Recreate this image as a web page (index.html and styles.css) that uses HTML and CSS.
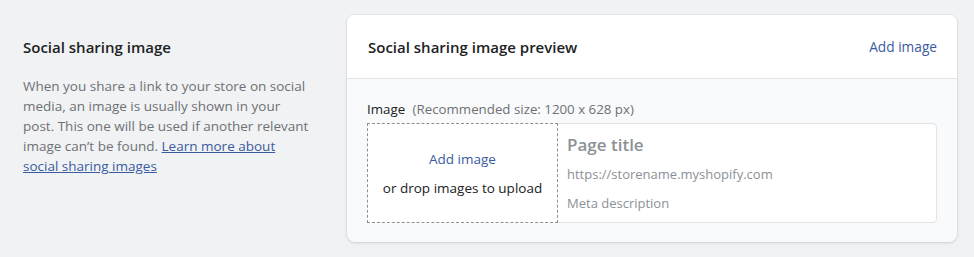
FILE: index.html
```html
<!DOCTYPE html>
<html lang="en">
<head>
<meta charset="utf-8">
<link rel="stylesheet" href="styles.css">
</head>
<body>
<div class="layout">
  <section class="annotation">
    <h2 class="annotation-title">Social sharing image</h2>
    <p class="annotation-text">When you share a link to your store on social media, an image is usually shown in your post. This one will be used if another relevant image can’t be found. <a class="link" href="#">Learn more about social sharing images</a></p>
  </section>
  <section class="card">
    <header class="card-header">
      <h3 class="card-title">Social sharing image preview</h3>
      <a class="action" href="#">Add image</a>
    </header>
    <div class="card-body">
      <div class="label">Image <span class="hint">(Recommended size: 1200 x 628 px)</span></div>
      <div class="preview">
        <div class="dropzone">
          <a class="drop-link" href="#">Add image</a>
          <span class="drop-hint">or drop images to upload</span>
        </div>
        <div class="meta">
          <div class="meta-title">Page title</div>
          <div class="meta-url">https://storename.myshopify.com</div>
          <div class="meta-desc">Meta description</div>
        </div>
      </div>
    </div>
  </section>
</div>
</body>
</html>
```
FILE: styles.css
```css
* { box-sizing: border-box; }
html, body { margin: 0; }
body {
  background: #f1f2f4;
  font-family: "Open Sans", "Noto Sans", sans-serif;
  color: #202223;
  width: 974px;
  height: 257px;
  overflow: hidden;
}
.layout {
  display: grid;
  grid-template-columns: 288px 610px;
  column-gap: 36px;
  padding: 15px 17px 0 23px;
}
.annotation { padding-top: 22px; }
.annotation-title {
  margin: 0;
  font-size: 15px;
  font-weight: 600;
  line-height: 20px;
  color: #202223;
}
.annotation-text {
  margin: 19px 0 0;
  font-size: 13.5px;
  line-height: 20px;
  color: #6d7175;
}
.link { color: #3a5ba0; text-decoration: underline; }
.card {
  background: #f9fafb;
  border-radius: 8px;
  box-shadow: 0 0 0 1px rgba(63,63,68,0.05), 0 1px 3px rgba(63,63,68,0.15);
  overflow: hidden;
}
.card-header {
  height: 64px;
  background: #fff;
  border-bottom: 1px solid #e1e3e5;
  display: flex;
  align-items: center;
  justify-content: space-between;
  padding: 0 20px 0 21px;
}
.card-title {
  margin: 0;
  font-size: 15px;
  font-weight: 600;
  line-height: 20px;
}
.action {
  color: #3a5ba0;
  text-decoration: none;
  font-size: 13.7px;
  line-height: 20px;
}
.card-body { padding: 20px 20px 19px 20px; }
.label {
  font-size: 13.3px;
  line-height: 20px;
  color: #202223;
}
.hint { color: #6d7175; margin-left: 4px; }
.preview {
  margin-top: 4px;
  height: 100px;
  display: flex;
  background: #fff;
  border: 1px solid #e1e3e5;
  border-radius: 4px;
}
.dropzone {
  width: 191px;
  margin: -1px 0 -1px -1px;
  border: 1px dashed #8c9196;
  background: #fff;
  display: flex;
  flex-direction: column;
  align-items: center;
  justify-content: center;
  gap: 9px;
}
.drop-link {
  color: #3a5ba0;
  text-decoration: none;
  font-size: 13.5px;
  line-height: 20px;
}
.drop-hint {
  font-size: 13.5px;
  line-height: 20px;
  color: #202223;
}
.meta {
  padding: 9px 10px 0 9px;
  display: flex;
  flex-direction: column;
}
.meta-title {
  font-size: 17px;
  font-weight: 600;
  line-height: 24px;
  color: #8c9196;
}
.meta-url, .meta-desc {
  font-size: 13px;
  line-height: 20px;
  color: #8c9196;
}
.meta-url { margin-top: 7px; }
.meta-desc { margin-top: 9px; }
```
